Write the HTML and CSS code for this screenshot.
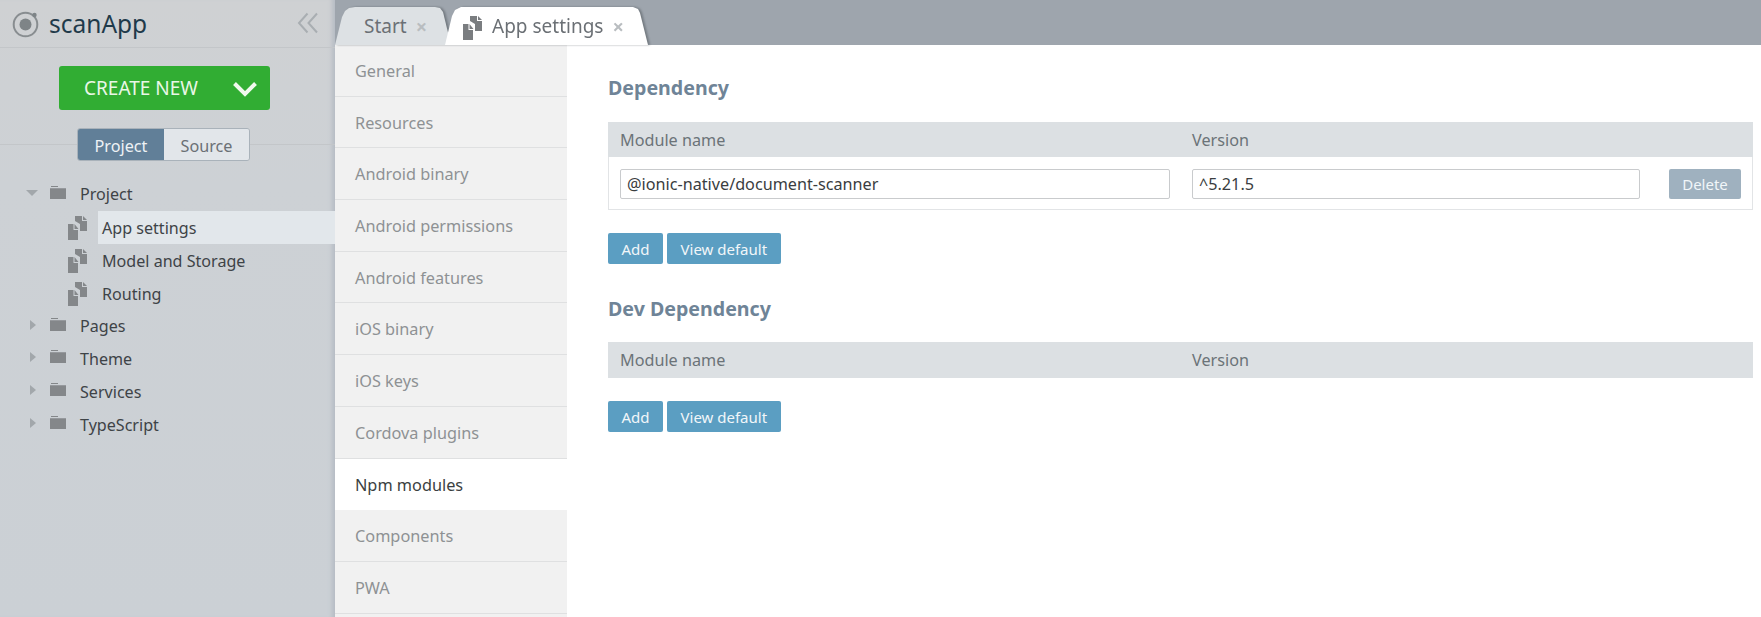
FILE: index.html
```html
<!DOCTYPE html>
<html lang="en">
<head>
<meta charset="utf-8">
<title>scanApp</title>
<link rel="stylesheet" href="styles.css">
</head>
<body>
<svg class="defs" width="0" height="0" aria-hidden="true">
  <symbol id="pages" viewBox="0 0 20 24">
    <path d="M7 0h7v5h5v10h-7V8L7 5zM15 0l4 4h-4z"/>
    <path d="M0 8h5.500v6h4.500v10H0zM6.500 8l4 5h-4z"/>
  </symbol>
  <symbol id="folder" viewBox="0 0 16 13">
    <path d="M1 0h7v1H1zM0 2.200h16V13H0z"/>
  </symbol>
</svg>
<div class="app">
  <aside class="sidebar">
    <header class="brand">
      <svg class="logo" viewBox="0 0 28 28"><circle cx="13.500" cy="14.500" r="11.800" fill="none" stroke="#888d90" stroke-width="2"/><circle cx="13.500" cy="14.500" r="6" fill="#7e8487"/><circle cx="22.500" cy="5" r="2.200" fill="#7e8487"/></svg>
      <span class="brand-name">scanApp</span>
      <svg class="collapse" viewBox="0 0 22 22"><path d="M10.500 1.500 2 11l8.500 9.500M20 1.500 11.500 11l8.500 9.500" fill="none" stroke="#a9aeb2" stroke-width="2"/></svg>
    </header>
    <div class="create-wrap">
      <button class="create"><span>CREATE NEW</span><svg viewBox="0 0 26 16"><path d="M2.500 2.500 13 13 23.500 2.500" fill="none" stroke="#f0f9ee" stroke-width="4"/></svg></button>
    </div>
    <div class="switch-wrap">
      <div class="switch"><span class="sw sw-on">Project</span><span class="sw">Source</span></div>
    </div>
    <ul class="tree">
      <li class="tree-row"><i class="arrow arrow-down"></i><svg class="folder"><use href="#folder"/></svg><span>Project</span></li>
      <li class="tree-row child active"><svg class="page"><use href="#pages"/></svg><span class="label">App settings</span></li>
      <li class="tree-row child"><svg class="page"><use href="#pages"/></svg><span class="label">Model and Storage</span></li>
      <li class="tree-row child"><svg class="page"><use href="#pages"/></svg><span class="label">Routing</span></li>
      <li class="tree-row"><i class="arrow"></i><svg class="folder"><use href="#folder"/></svg><span>Pages</span></li>
      <li class="tree-row"><i class="arrow"></i><svg class="folder"><use href="#folder"/></svg><span>Theme</span></li>
      <li class="tree-row"><i class="arrow"></i><svg class="folder"><use href="#folder"/></svg><span>Services</span></li>
      <li class="tree-row"><i class="arrow"></i><svg class="folder"><use href="#folder"/></svg><span>TypeScript</span></li>
    </ul>
  </aside>
  <div class="main">
    <nav class="tabs">
      <div class="tab-strip">
        <div class="tab"><span>Start</span><b class="x">×</b></div>
        <div class="tab tab-on"><svg class="tab-icon"><use href="#pages"/></svg><span>App settings</span><b class="x">×</b></div>
      </div>
    </nav>
    <div class="body">
      <ul class="menu">
        <li>General</li>
        <li>Resources</li>
        <li>Android binary</li>
        <li>Android permissions</li>
        <li>Android features</li>
        <li>iOS binary</li>
        <li>iOS keys</li>
        <li>Cordova plugins</li>
        <li class="on">Npm modules</li>
        <li>Components</li>
        <li>PWA</li>
      </ul>
      <section class="content">
        <h2>Dependency</h2>
        <div class="thead"><span class="c1">Module name</span><span>Version</span></div>
        <div class="trow">
          <input class="field f1" value="@ionic-native/document-scanner">
          <input class="field f2" value="^5.21.5">
          <button class="btn del">Delete</button>
        </div>
        <div class="actions"><button class="btn">Add</button><button class="btn">View default</button></div>
        <h2 class="second">Dev Dependency</h2>
        <div class="thead tall"><span class="c1">Module name</span><span>Version</span></div>
        <div class="actions"><button class="btn">Add</button><button class="btn">View default</button></div>
      </section>
    </div>
  </div>
</div>
</body>
</html>
```
FILE: styles.css
```css
* { box-sizing: border-box; }
html, body { margin: 0; height: 100%; overflow: hidden; }
body { font-family: "Noto Sans", "Open Sans", sans-serif; font-size: 16px; color: #444; background: #fff; }
.defs { position: absolute; }
ul { list-style: none; margin: 0; padding: 0; }
.app { display: flex; height: 617px; }

.sidebar { width: 335px; flex: none; background: linear-gradient(#cfd1d3, #cdd1d5 30%, #cbd0d5); box-shadow: inset -6px 0 4px -3px #b6bcc4; }
.brand { height: 48px; display: flex; align-items: center; padding-left: 12px; border-bottom: 1px solid #c3c6c9; }
.logo { width: 28px; height: 28px; }
.brand-name { font-size: 24.500px; color: #1f3a4a; margin-left: 9px; }
.collapse { width: 22px; height: 22px; margin: 0 16px 2px auto; }
.create-wrap { height: 97px; padding: 18px 0 0 59px; border-bottom: 1px solid #c3c6c9; }
.create { width: 211px; height: 44px; border: 0; border-radius: 3px; background: #31ad33; color: #e9f7e6; font: 19px "Noto Sans", sans-serif; display: flex; align-items: center; padding: 0 12px 0 25px; justify-content: space-between; }
.create svg { width: 26px; height: 16px; margin-top: 2px; }
.switch-wrap { height: 0; display: flex; padding-left: 77px; }
.switch { display: flex; height: 33px; transform: translateY(-17px); border-radius: 3px; overflow: hidden; border: 1px solid #a9b2ba; }
.sw { width: 85px; padding-top: 2px; display: flex; align-items: center; justify-content: center; background: #e2e6ea; color: #6b7075; font-size: 16.200px; }
.sw-on { width: 86px; background: #617f98; color: #eef2f5; }
.tree { padding-top: 33px; }
.tree-row { height: 32.900px; display: flex; align-items: center; padding-left: 27px; font-size: 16.100px; color: #3e4347; }
.tree-row > span { margin-left: 14px; }
.arrow { width: 0; height: 0; border-style: solid; border-width: 5px 0 5px 6px; border-color: transparent transparent transparent #a2a7ab; margin: -3px 7px 0 3px; }
.arrow-down { border-width: 6px 6px 0; border-color: #a2a7ab transparent transparent; margin: -3px 4px 0 -1px; }
.folder { width: 16px; height: 13px; fill: #84878a; margin: -4px 0 0 7px; flex: none; }
.arrow-down + .folder { margin-left: 8px; }
.child { padding-left: 68px; }
.page { width: 20px; height: 24px; fill: #84878a; flex: none; margin-top: 2px; }
.tree-row > .label { margin-left: 10px; padding: 1px 0 0 4px; height: 33px; flex: 1; display: flex; align-items: center; }
.active .label { background: #e2e7eb; }

.main { flex: 1; display: flex; flex-direction: column; min-width: 0; }
.tabs { height: 45px; flex: none; background: #9ea5ad; padding-top: 7px; }
.tab-strip { display: flex; height: 38px; filter: drop-shadow(2px 0 1px rgba(60, 66, 72, .45)); }
.tab { width: 116px; height: 38px; padding-left: 29px; display: flex; align-items: center; gap: 9px; background: #dde1e4; color: #6b7075; font-size: 19px; clip-path: polygon(0 38px, 7px 10px, 10px 4px, 14px 1px, 20px 0, 100px 0, 105px 1px, 108px 5px, 116px 38px); }
.tab-on { width: 203px; margin-left: -6px; padding-left: 18px; background: #fff; clip-path: polygon(0 38px, 7px 9px, 10px 3px, 16px 0, 188px 0, 193px 2px, 195px 6px, 203px 38px); }
.x { font-weight: 700; font-size: 20px; color: #b9bdc0; }
.tab-icon { width: 20px; height: 24px; fill: #7a7d80; margin-top: 3px; flex: none; }
.body { flex: 1; display: flex; min-height: 0; }
.menu { width: 232px; flex: none; background: #f1f1f1; }
.menu li { height: 51.700px; padding: 1px 0 0 20px; display: flex; align-items: center; border-bottom: 1px solid #dfe0e1; color: #8e9194; font-size: 16.300px; }
.menu .on { background: #fff; color: #3b3f42; border-bottom: 0; }
.content { flex: 1; padding: 29px 8px 0 41px; }
h2 { margin: 0 0 20px; font-size: 19.600px; line-height: 28px; font-weight: 700; color: #6f8497; }
.second { margin: 31px 0 19px; }
.thead { height: 35px; background: #dce0e3; display: flex; align-items: center; padding-left: 12px; color: #6b7378; font-size: 16.200px; }
.tall { height: 36px; }
.c1 { width: 572px; }
.trow { height: 53px; display: flex; align-items: center; padding: 1px 11px 0; border: 1px solid #e2e4e6; border-top: 0; }
.field { height: 30px; border: 1px solid #c9cbcd; border-radius: 2px; padding: 0 6px; font: 16.200px "Noto Sans", sans-serif; color: #3a3d40; outline: 0; }
.f1 { width: 550px; margin-right: 22px; }
.f2 { width: 448px; margin-right: 29px; }
.btn { height: 31px; border: 0; border-radius: 2px; background: #5b9ec2; color: #f1f6f9; font: 15px "Noto Sans", sans-serif; padding: 0 13.500px; }
.del { width: 72px; height: 30px; background: #9fb1bf; padding: 0; }
.actions { display: flex; gap: 4px; margin-top: 23px; }
```
